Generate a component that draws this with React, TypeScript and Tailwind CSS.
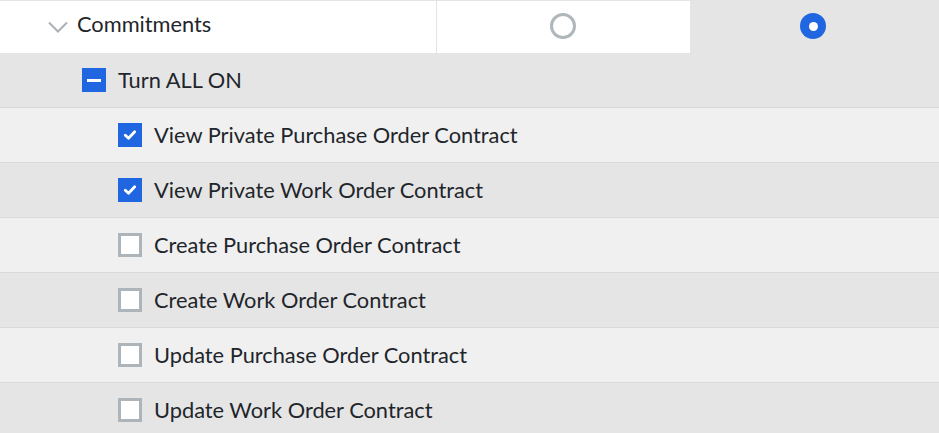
import React from "react";

const rows = [
  { label: "View Private Purchase Order Contract", checked: true },
  { label: "View Private Work Order Contract", checked: true },
  { label: "Create Purchase Order Contract", checked: false },
  { label: "Create Work Order Contract", checked: false },
  { label: "Update Purchase Order Contract", checked: false },
  { label: "Update Work Order Contract", checked: false },
];

function Check({ checked }: { checked: boolean }) {
  if (checked) {
    return (
      <div className="w-6 h-6 bg-[#1f66e0] flex items-center justify-center shrink-0">
        <svg width="14" height="14" viewBox="0 0 14 14">
          <path d="M2.3 7.3 L5.5 10.3 L11.7 3.7" fill="none" stroke="white" strokeWidth="2.8" strokeLinecap="round" strokeLinejoin="round" />
        </svg>
      </div>
    );
  }
  return <div className="w-6 h-6 bg-white border-[3px] border-[#adb5ba] shrink-0" />;
}

export default function App() {
  return (
    <div className="w-[939px] h-[433px] overflow-hidden bg-[#e5e5e5] text-[#1f262b] text-[21.8px]" style={{ fontFamily: "Lato, 'Open Sans', sans-serif" }}>
      <div className="border-t border-[#e4e4e4] flex h-[53px]">
        <div className="w-[436px] bg-white flex items-center pl-[48px] gap-[9px] pb-[5px]">
          <svg width="20" height="12" viewBox="0 0 20 12" className="mt-[4px]">
            <path d="M1 1.5 L10 10.5 L19 1.5" fill="none" stroke="#a9b1b5" strokeWidth="2" />
          </svg>
          <span>Commitments</span>
        </div>
        <div className="w-px bg-[#e4e4e4]" />
        <div className="w-[253px] bg-white flex items-center justify-center pr-[2px] pb-[2px]">
          <div className="w-[26px] h-[26px] rounded-full border-[3px] border-[#b0b7bb]" />
        </div>
        <div className="flex-1 flex items-center justify-center pr-[3px] pb-[2px]">
          <div className="w-[26px] h-[26px] rounded-full bg-[#1f66e0] flex items-center justify-center">
            <div className="w-[9px] h-[9px] rounded-full bg-white" />
          </div>
        </div>
      </div>
      <div className="h-[55px] bg-[#e5e5e5] border-b border-[#d9d9d9] flex items-center pl-[82px] gap-[12px]">
        <div className="w-6 h-6 bg-[#1f66e0] flex items-center justify-center shrink-0">
          <div className="w-[14px] h-[3px] bg-white" />
        </div>
        <span>Turn ALL ON</span>
      </div>
      {rows.map((r, i) => (
        <div
          key={r.label}
          className={`h-[55px] border-b border-[#d9d9d9] flex items-center pl-[118px] gap-[12px] ${i % 2 === 0 ? "bg-[#f0f0f0]" : "bg-[#e5e5e5]"}`}
        >
          <Check checked={r.checked} />
          <span>{r.label}</span>
        </div>
      ))}
    </div>
  );
}
